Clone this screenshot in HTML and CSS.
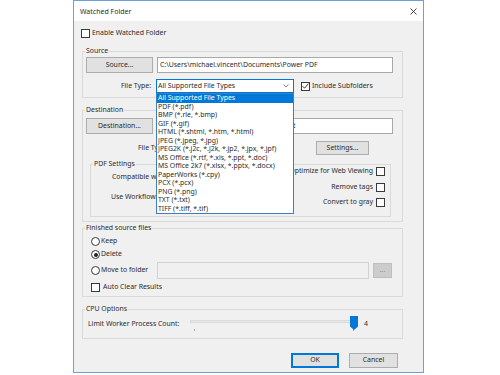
FILE: index.html
```html
<!DOCTYPE html>
<html>
<head>
<meta charset="utf-8">
<title>Watched Folder</title>
<link rel="stylesheet" href="styles.css">
</head>
<body>
<div class="dialog">
  <div class="titlebar">
    <span class="title">Watched Folder</span>
    <svg class="close" width="7" height="7" viewBox="0 0 7 7"><path d="M0.5 0.5L6.5 6.5M6.5 0.5L0.5 6.5" stroke="#333" stroke-width="0.9" fill="none"/></svg>
  </div>
  <div class="content">
    <div class="check enable"><span class="box"></span><span>Enable Watched Folder</span></div>

    <fieldset class="group source">
      <legend>Source</legend>
      <div class="row r1">
        <div class="btn side">Source...</div>
        <div class="field">C:\Users\michael.vincent\Documents\Power PDF</div>
      </div>
      <div class="row r2">
        <div class="lbl ft">File Type:</div>
        <div class="combo">
          <span>All Supported File Types</span>
          <svg class="chev" width="6" height="4" viewBox="0 0 6 4"><path d="M0.5 0.5L3 3L5.5 0.5" stroke="#666" stroke-width="0.8" fill="none"/></svg>
          <ul class="list">
            <li class="sel">All Supported File Types</li>
            <li>PDF (*.pdf)</li>
            <li>BMP (*.rle, *.bmp)</li>
            <li>GIF (*.gif)</li>
            <li>HTML (*.shtml, *.htm, *.html)</li>
            <li>JPEG (*.jpeg, *.jpg)</li>
            <li>JPEG2K (*.j2c, *.j2k, *.jp2, *.jpx, *.jpf)</li>
            <li>MS Office (*.rtf, *.xls, *.ppt, *.doc)</li>
            <li>MS Office 2k7 (*.xlsx, *.pptx, *.docx)</li>
            <li>PaperWorks (*.cpy)</li>
            <li>PCX (*.pcx)</li>
            <li>PNG (*.png)</li>
            <li>TXT (*.txt)</li>
            <li>TIFF (*.tiff, *.tif)</li>
          </ul>
        </div>
        <div class="check inc"><span class="box"><svg width="7" height="6" viewBox="0 0 7 6"><path d="M0.6 3.2L2.6 5.2L6.4 0.6" stroke="#222" stroke-width="0.9" fill="none"/></svg></span><span>Include Subfolders</span></div>
      </div>
    </fieldset>

    <fieldset class="group dest">
      <legend>Destination</legend>
      <div class="row r1">
        <div class="btn side">Destination...</div>
        <div class="field">C:\Users\michael.vincent\Desktop\Output</div>
      </div>
      <div class="row r2">
        <div class="lbl ft2">File Type:</div>
        <div class="btn settings">Settings...</div>
      </div>
      <fieldset class="inner">
        <legend>PDF Settings</legend>
        <div class="cols">
          <div class="leftcol">
            <div class="lbl l1">Compatible with:</div>
            <div class="lbl l2">Use Workflow:</div>
          </div>
          <div class="rightcol">
            <div class="check rc"><span>Optimize for Web Viewing</span><span class="box"></span></div>
            <div class="check rc"><span>Remove tags</span><span class="box"></span></div>
            <div class="check rc"><span>Convert to gray</span><span class="box"></span></div>
          </div>
        </div>
      </fieldset>
    </fieldset>

    <fieldset class="group finished">
      <legend>Finished source files</legend>
      <div class="opt keep"><span class="radio"></span><span>Keep</span></div>
      <div class="opt del"><span class="radio on"></span><span>Delete</span></div>
      <div class="moverow">
        <div class="opt move"><span class="radio"></span><span>Move to folder</span></div>
        <div class="field dis"></div>
        <div class="btn dots">...</div>
      </div>
      <div class="check auto"><span class="box"></span><span>Auto Clear Results</span></div>
    </fieldset>

    <fieldset class="group cpu">
      <legend>CPU Options</legend>
      <div class="cpurow">
        <div class="lbl limit">Limit Worker Process Count:</div>
        <div class="slider">
          <div class="track"></div>
          <span class="tick t1"></span>
          <span class="tick t2"></span>
          <svg class="thumb" width="8" height="14" viewBox="0 0 8 14"><path d="M0 0H8V10.5L4 14L0 10.5Z" fill="#0078d7"/></svg>
        </div>
        <div class="val">4</div>
      </div>
    </fieldset>

    <div class="actions">
      <div class="btn ok">OK</div>
      <div class="btn cancel">Cancel</div>
    </div>
  </div>
</div>
</body>
</html>
```

FILE: styles.css
```css
* { box-sizing: border-box; }
html, body { margin: 0; padding: 0; }
body {
  background: #fff;
  font-family: "Noto Sans", "Open Sans", sans-serif;
  font-size: 6.9px;
  line-height: 1;
  color: #2b2b2b;
}
.dialog {
  margin-left: 73px;
  width: 351px;
  height: 373px;
  border: 1px solid #6ea2d5;
  background: #f0f0f0;
  display: flex;
  flex-direction: column;
}
.titlebar {
  flex: none;
  height: 20px;
  background: #fff;
  display: flex;
  align-items: center;
  justify-content: space-between;
  padding: 0 6px;
  font-size: 7px;
}
.content {
  flex: 1;
  display: flex;
  flex-direction: column;
  padding: 0 20px 0 8px;
}
.check {
  display: flex;
  align-items: center;
  gap: 2px;
  height: 9px;
  white-space: nowrap;
}
.box {
  flex: none;
  width: 9px;
  height: 9px;
  border: 1px solid #3a3a3a;
  background: #fff;
  display: flex;
  align-items: center;
  justify-content: center;
}
.enable { margin-top: 8px; margin-left: -1px; }

.group {
  flex: none;
  margin: 0;
  width: 321px;
  min-width: 0;
  border: 1px solid #dadada;
  padding: 0 9px 0 3px;
}
.group > legend, .inner > legend {
  padding: 0 1px;
  margin-left: -1px;
  line-height: 8px;
}
.row { display: flex; align-items: center; }
.btn {
  background: #e1e1e1;
  border: 1px solid #adadad;
  display: flex;
  align-items: center;
  justify-content: center;
  white-space: nowrap;
}
.field {
  background: #fff;
  border: 1px solid #a8a8a8;
  display: flex;
  align-items: center;
  padding-left: 2px;
  white-space: nowrap;
  overflow: hidden;
}
.lbl { white-space: nowrap; }

/* Source */
.source { margin-top: 9px; height: 51px; }
.source .r1, .dest .r1 { height: 16px; }
.source .r1 { margin-top: 2px; }
.side { width: 67px; height: 16px; }
.r1 .field { flex: 1; height: 16px; margin-left: 4px; }
.source .r2 { height: 14px; margin-top: 6px; }
.ft { width: 67px; text-align: right; padding-right: 2px; }
.combo {
  position: relative;
  width: 138px;
  height: 14px;
  margin-left: 3px;
  border: 1px solid #0078d7;
  background: #fff;
  display: flex;
  align-items: center;
  justify-content: space-between;
  padding: 0 4px 0 1px;
}
.list {
  position: absolute;
  z-index: 5;
  left: -1px;
  top: calc(100% + 1px);
  width: 138px;
  height: 121px;
  margin: 0;
  padding: 0;
  list-style: none;
  background: #fff;
  border: 1px solid #3d7fc2;
  overflow: hidden;
}
.list li {
  height: 8.5px;
  line-height: 8.5px;
  padding-left: 1px;
  white-space: nowrap;
}
.list li.sel { background: #0078d7; color: #fff; }
.inc { margin-left: 7px; }

/* Destination */
.dest { margin-top: 8px; height: 116px; }
.dest .r1 { margin-top: 4px; }
.dest .r2 { height: 14px; margin-top: 7px; }
.ft2 { width: 82px; text-align: right; }
.settings { width: 53px; height: 14px; margin-left: auto; margin-right: 24px; }
.inner {
  margin: 5px 0 0 4px;
  width: 301px;
  height: 57px;
  min-width: 0;
  border: 1px solid #dadada;
  padding: 0 5px 0 3px;
}
.cols { display: flex; justify-content: space-between; }
.leftcol { display: flex; flex-direction: column; margin-left: 17px; }
.leftcol .lbl { height: 10px; line-height: 10px; }
.l1 { margin-top: 4px; margin-left: 1px; }
.l2 { margin-top: 10px; }
.rightcol {
  display: flex;
  flex-direction: column;
  align-items: flex-end;
  gap: 6.5px;
  margin-top: -1px;
}
.rc { gap: 3px; }

/* Finished */
.finished { margin-top: 2px; height: 73px; }
.opt { display: flex; align-items: center; gap: 1px; height: 9px; white-space: nowrap; }
.radio {
  flex: none;
  width: 9px;
  height: 9px;
  border: 1px solid #3a3a3a;
  border-radius: 50%;
  background: #fff;
  display: flex;
  align-items: center;
  justify-content: center;
}
.radio.on::after {
  content: "";
  width: 4px;
  height: 4px;
  border-radius: 50%;
  background: #222;
}
.keep { margin: 5px 0 0 5px; }
.del { margin: 4px 0 0 5px; }
.moverow { display: flex; align-items: center; height: 17px; margin-top: 3px; margin-left: 5px; }
.move { width: 66px; }
.field.dis { width: 212px; height: 17px; background: #f0f0f0; border-color: #d2d2d2; }
.dots { width: 19px; height: 15px; margin-left: 4px; background: #cccccc; border-color: #bfbfbf; color: #8a8a8a; }
.auto { margin: 4px 0 0 5px; gap: 3px; }

/* CPU */
.cpu { margin-top: 8px; height: 34px; }
.cpurow { display: flex; align-items: center; height: 16px; margin-top: 3px; margin-left: 2px; }
.limit { width: 98px; }
.slider { position: relative; width: 172px; height: 16px; }
.track {
  position: absolute;
  left: 4px;
  right: 4px;
  top: 4px;
  height: 3px;
  background: #e7e7e7;
  border: 1px solid #dadada;
}
.tick { position: absolute; top: 13px; width: 1px; height: 2px; background: #a8a8a8; }
.t1 { left: 8px; }
.t2 { left: 167px; }
.thumb { position: absolute; left: 164px; top: 0; }
.val { margin-left: 6px; }

/* Actions */
.actions {
  display: flex;
  justify-content: flex-end;
  gap: 10px;
  margin-top: 14px;
  padding-right: 5px;
}
.ok { width: 48px; height: 15px; border: 2px solid #0078d7; }
.cancel { width: 49px; height: 15px; }
```
